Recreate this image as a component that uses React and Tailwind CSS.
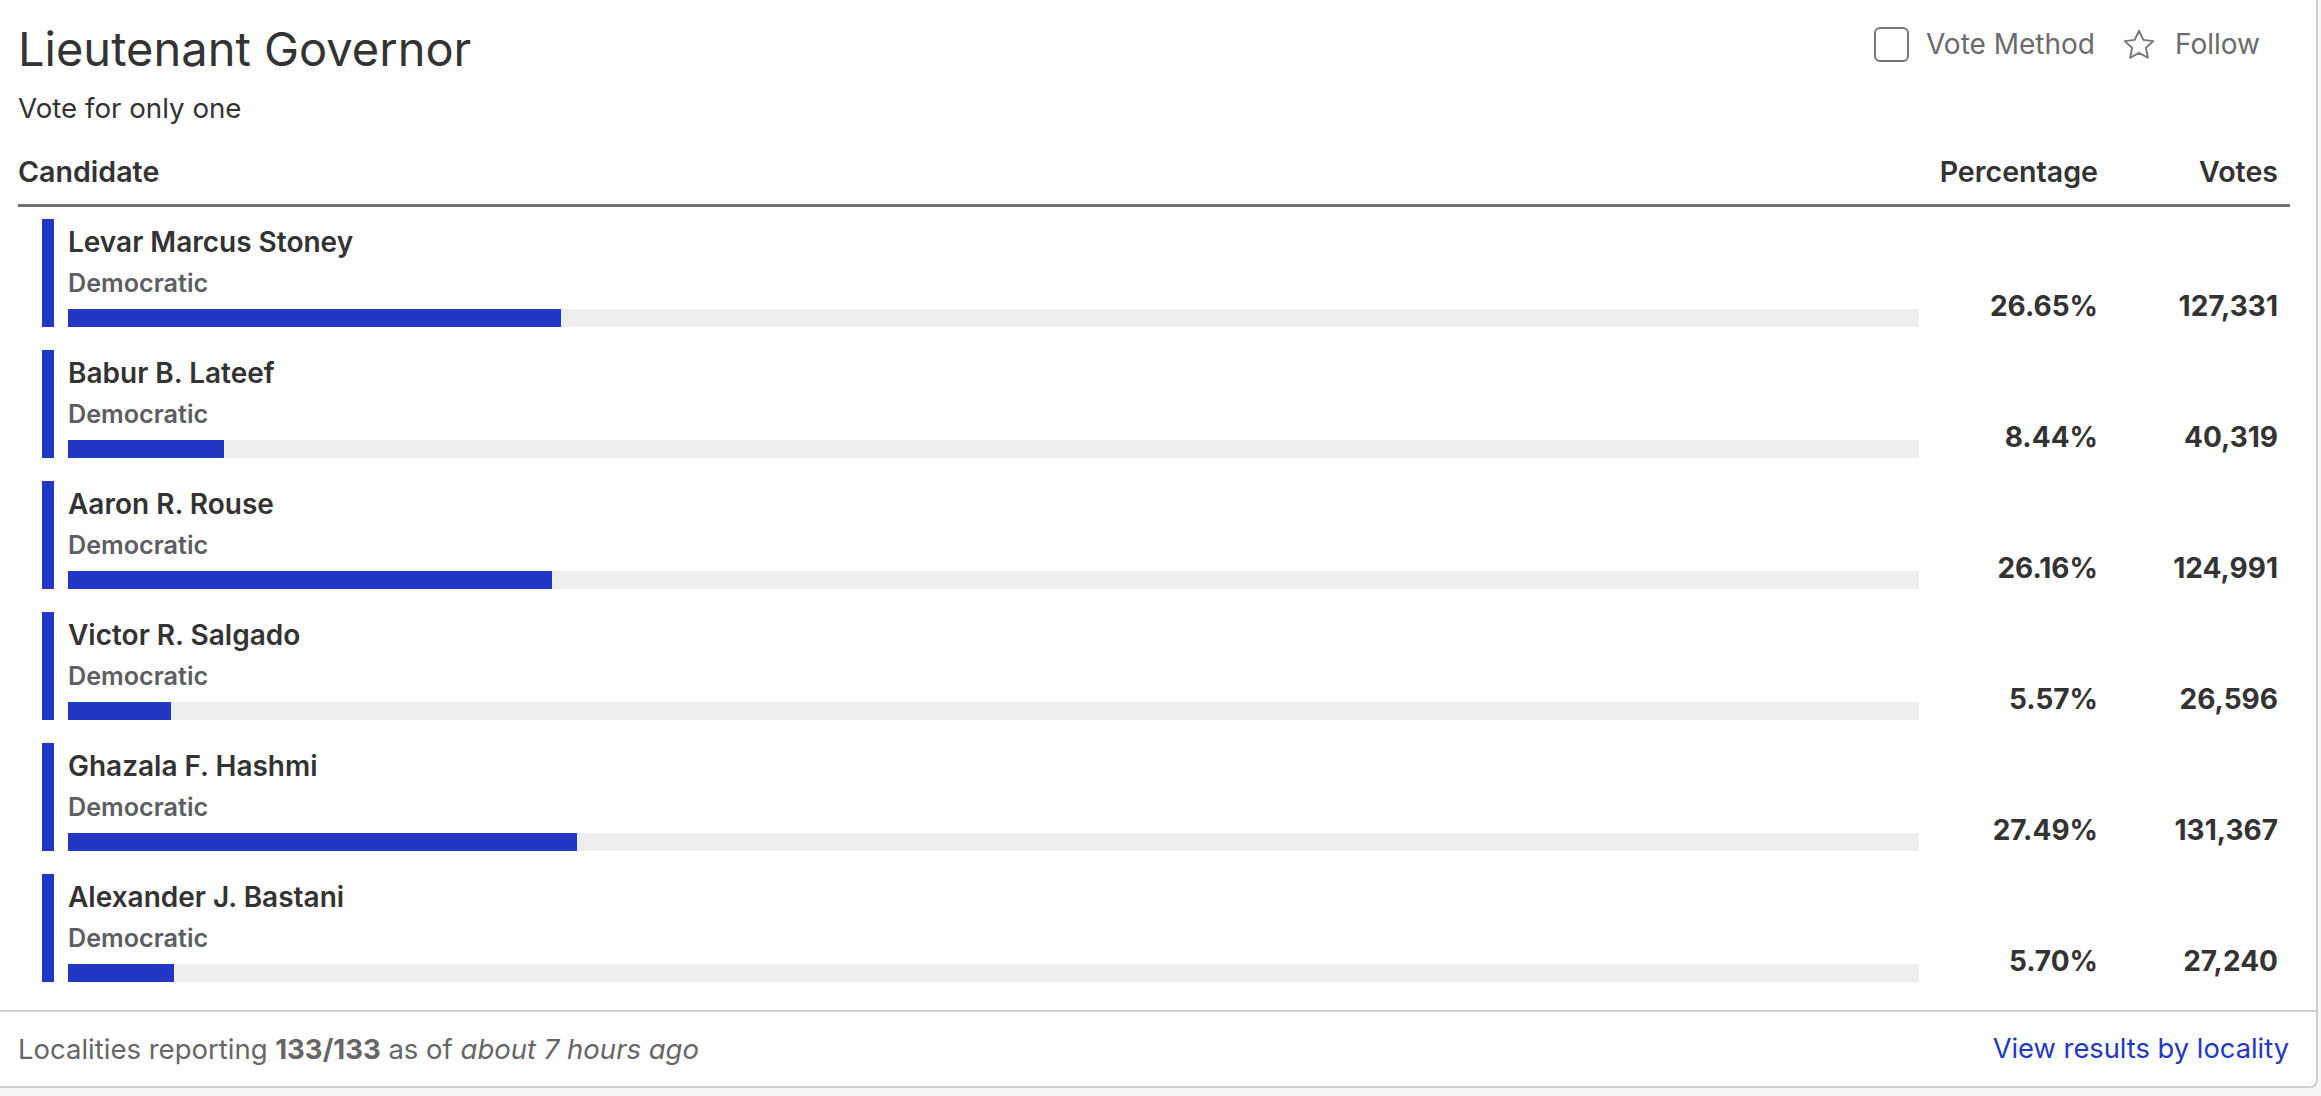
import React from "react";

const candidates = [
  { name: "Levar Marcus Stoney", party: "Democratic", pct: 26.65, votes: "127,331" },
  { name: "Babur B. Lateef", party: "Democratic", pct: 8.44, votes: "40,319" },
  { name: "Aaron R. Rouse", party: "Democratic", pct: 26.16, votes: "124,991" },
  { name: "Victor R. Salgado", party: "Democratic", pct: 5.57, votes: "26,596" },
  { name: "Ghazala F. Hashmi", party: "Democratic", pct: 27.49, votes: "131,367" },
  { name: "Alexander J. Bastani", party: "Democratic", pct: 5.7, votes: "27,240" },
];

const StarIcon = () => (
  <svg width="36" height="36" viewBox="0 0 24 24" fill="none" stroke="#777" strokeWidth="1.3" strokeLinejoin="round">
    <polygon points="12,2.5 14.9,8.6 21.5,9.4 16.6,13.9 17.9,20.5 12,17.2 6.1,20.5 7.4,13.9 2.5,9.4 9.1,8.6" />
  </svg>
);

const CandidateRow = ({ c }) => (
  <div className="flex h-[108px] pl-[24px]">
    <div className="w-[12px] bg-[#2337c5] shrink-0" />
    <div className="ml-[14px] flex-1 flex flex-col">
      <p className="mt-[3px] text-[28px] leading-[40px] font-semibold text-[#333]">{c.name}</p>
      <p className="mt-[2px] text-[25.2px] leading-[38px] font-semibold text-[#5c5e62]">{c.party}</p>
      <div className="mt-auto h-[18px] bg-[#eeeeee]">
        <div className="h-full bg-[#2337c5]" style={{ width: `${c.pct}%` }} />
      </div>
    </div>
    <div className="w-[179px] self-end text-right text-[28px] leading-[42px] font-bold text-[#333]">
      {c.pct.toFixed(2)}%
    </div>
    <div className="w-[180px] self-end text-right text-[28px] leading-[42px] font-bold text-[#333]">
      {c.votes}
    </div>
    <div className="w-[12px]" />
  </div>
);

export default function App() {
  return (
    <div className="w-[2321px] h-[1096px] bg-[#f7f7f7] font-['Inter',sans-serif] text-[#333]">
      <div className="w-[2318px] h-[1088px] bg-white border-r-2 border-b-2 border-[#cfcfcf] rounded-br-[8px] flex flex-col">
        <div className="pl-[18px] pr-[26px]">
          {/* title + actions */}
          <div className="flex justify-between items-start">
            <div>
              <h1 className="pt-[20px] text-[47px] leading-[58px] font-normal text-[#333]">Lieutenant Governor</h1>
              <p className="mt-[10px] text-[27.7px] leading-[40px] text-[#333]">Vote for only one</p>
            </div>
            <div className="mt-[27px] mr-[30px] flex items-center h-[35px] text-[28px] leading-[35px] text-[#6b6b6b]">
              <span className="w-[35px] h-[35px] rounded-[6px] border-[2.5px] border-[#777]" />
              <span className="ml-[17px]">Vote Method</span>
              <span className="ml-[26px] flex items-center">
                <StarIcon />
              </span>
              <span className="ml-[18px]">Follow</span>
            </div>
          </div>

          {/* column headers */}
          <div className="mt-[23px] flex items-end h-[42px] text-[28.6px] leading-[42px] font-semibold text-[#333]">
            <div className="flex-1">Candidate</div>
            <div className="w-[180px] text-right">Percentage</div>
            <div className="w-[180px] text-right">Votes</div>
            <div className="w-[12px]" />
          </div>
          <div className="mt-[11px] h-[3px] bg-[#707070]" />

          {/* rows */}
          <div className="pt-[12px] flex flex-col gap-[23px]">
            {candidates.map((c) => (
              <CandidateRow key={c.name} c={c} />
            ))}
          </div>
        </div>

        {/* footer */}
        <div className="mt-[28px] border-t-2 border-[#d0d0d0] h-[77px] flex items-center justify-between pl-[18px] pr-[27px]">
          <p className="text-[27.5px] leading-[39px] text-[#666]">
            Localities reporting <span className="font-bold">133/133</span> as of <span className="italic">about 7 hours ago</span>
          </p>
          <a className="text-[27.3px] leading-[40px] text-[#2337c5]">View results by locality</a>
        </div>
      </div>
    </div>
  );
}
